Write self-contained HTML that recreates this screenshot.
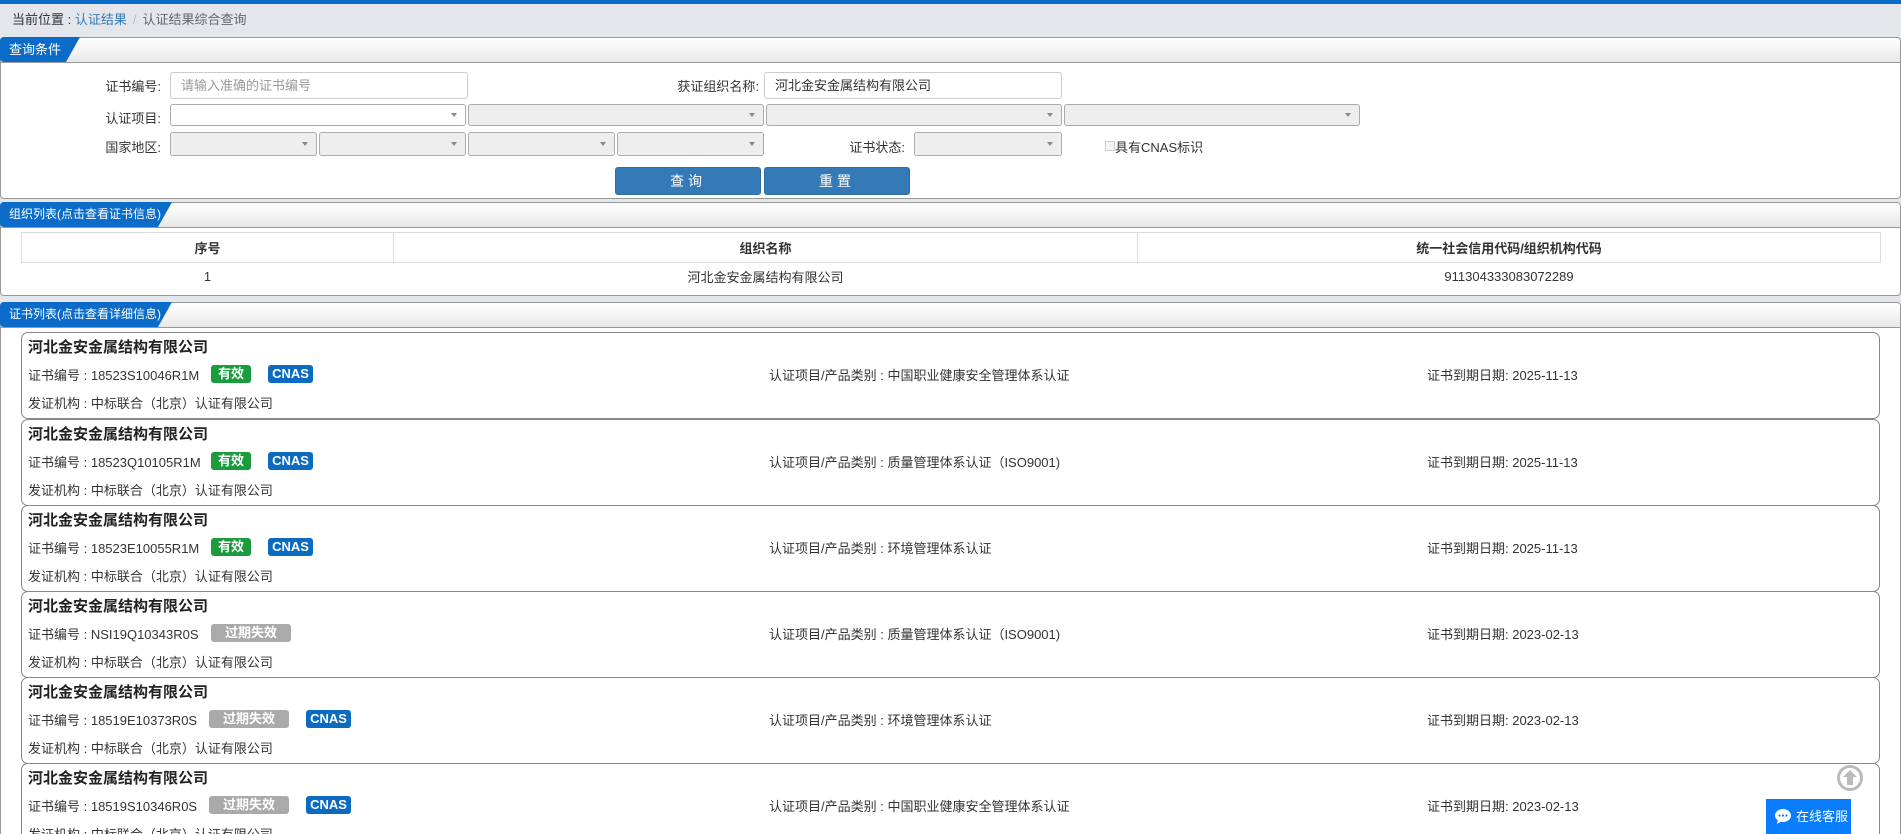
<!DOCTYPE html>
<html><head><meta charset="utf-8">
<style>
*{box-sizing:border-box;margin:0;padding:0}
html{width:1901px;height:834px;overflow:hidden}
body{width:1901px;height:834px;overflow:hidden;background:#e3e7eb;font-family:"Liberation Sans","Noto Sans CJK SC",sans-serif;font-size:13px;color:#333;position:relative}
.a{position:absolute}
.topbar{left:0;top:0;width:1901px;height:4px;background:#0a6bc9}
.bc{left:12px;top:9px;font-size:13px;color:#333}
.bc .l{color:#337ab7}.bc .s{color:#bbb;margin:0 6px}.bc .g{color:#666}
.panel{left:0;width:1901px;background:#fff;border:1px solid #999;border-radius:4px}
.ph{position:absolute;left:0;top:0;right:0;height:25px;background:linear-gradient(#fff,#e8e8e8);border-bottom:1px solid #999;border-radius:4px 4px 0 0}
.tab{position:absolute;left:-1px;top:-1px;height:25px;background:#0a6bc9;color:#fff;font-size:13px;line-height:25px;padding-left:9px;white-space:nowrap;border-radius:4px 0 0 4px;clip-path:polygon(0 0,100% 0,calc(100% - 14px) 100%,0 100%)}
.tab.s{font-size:12px}
.lbl{font-size:13px;color:#333;text-align:right}
.inp{border:1px solid #ccc;border-radius:3px;background:#fff;font-size:13px;padding-left:10px;line-height:26px}
.sel{border:1px solid #aaa;border-radius:3px;background:#eee}
.sel.w{background:#fff}
.sel::after{content:"";position:absolute;right:8px;top:50%;margin-top:-2px;border:3.5px solid transparent;border-top:4px solid #888}
.btn{background:#337ab7;border:1px solid #2e6da4;border-radius:3px;color:#fff;text-align:center;line-height:26px;font-size:14px;letter-spacing:4px}
table{border-collapse:collapse}
.card{left:21px;width:1859px;height:87px;border:1px solid #888;border-radius:7px;background:#fff}
.card .t{position:absolute;left:6px;top:3px;font-size:15px;font-weight:bold;color:#222}
.card .r{position:absolute;top:32px;font-size:13px}
.card .f{position:absolute;left:6px;top:60px;font-size:13px}
.bd{position:absolute;top:32px;height:18px;border-radius:3px;color:#fff;font-weight:bold;font-size:13px;text-align:center;line-height:18px}
.ok{background:#1a9b3c;width:40px;left:189px}
.cn{background:#0a6bc0;width:45px}
.ex{background:#aaa;width:80px;left:189px}
</style></head><body>
<div class="a topbar"></div>
<div class="a bc">当前位置 : <span class="l">认证结果</span><span class="s">/</span><span class="g">认证结果综合查询</span></div>

<div class="a panel" style="top:37px;height:162px">
 <div class="ph"></div><div class="tab" style="width:80px">查询条件</div>
 <div class="a lbl" style="left:60px;top:38px;width:100px">证书编号:</div>
 <div class="a inp" style="left:169px;top:34px;width:298px;height:27px;color:#999">请输入准确的证书编号</div>
 <div class="a lbl" style="left:600px;top:38px;width:158px">获证组织名称:</div>
 <div class="a inp" style="left:763px;top:34px;width:298px;height:27px">河北金安金属结构有限公司</div>
 <div class="a lbl" style="left:60px;top:70px;width:100px">认证项目:</div>
 <div class="a sel w" style="left:169px;top:66px;width:296px;height:22px"></div>
 <div class="a sel" style="left:467px;top:66px;width:296px;height:22px"></div>
 <div class="a sel" style="left:765px;top:66px;width:296px;height:22px"></div>
 <div class="a sel" style="left:1063px;top:66px;width:296px;height:22px"></div>
 <div class="a lbl" style="left:60px;top:99px;width:100px">国家地区:</div>
 <div class="a sel" style="left:169px;top:94px;width:147px;height:24px"></div>
 <div class="a sel" style="left:318px;top:94px;width:147px;height:24px"></div>
 <div class="a sel" style="left:467px;top:94px;width:147px;height:24px"></div>
 <div class="a sel" style="left:616px;top:94px;width:147px;height:24px"></div>
 <div class="a lbl" style="left:800px;top:99px;width:104px">证书状态:</div>
 <div class="a sel" style="left:913px;top:94px;width:148px;height:24px"></div>
 <div class="a" style="left:1104px;top:103px;width:10px;height:10px;border:1px solid #ccc;background:#f5f5f5"></div>
 <div class="a" style="left:1114px;top:99px;font-size:13px">具有CNAS标识</div>
 <div class="a btn" style="left:614px;top:129px;width:146px;height:28px">查询</div>
 <div class="a btn" style="left:763px;top:129px;width:146px;height:28px">重置</div>
</div>

<div class="a panel" style="top:202px;height:94px">
 <div class="ph"></div><div class="tab s" style="width:172px">组织列表(点击查看证书信息)</div>
 <table class="a" style="left:20px;top:29px;width:1860px;font-size:13px">
  <tr style="height:30px;font-weight:bold"><td style="border:1px solid #ddd;width:372px;text-align:center">序号</td><td style="border:1px solid #ddd;width:744px;text-align:center">组织名称</td><td style="border:1px solid #ddd;text-align:center">统一社会信用代码/组织机构代码</td></tr>
  <tr style="height:27px"><td style="text-align:center">1</td><td style="text-align:center">河北金安金属结构有限公司</td><td style="text-align:center">911304333083072289</td></tr>
 </table>
</div>

<div class="a panel" style="top:302px;height:540px">
 <div class="ph"></div><div class="tab s" style="width:172px">证书列表(点击查看详细信息)</div>
</div>

<div class="a card" style="top:332px"><div class="t">河北金安金属结构有限公司</div><div class="r" style="left:6px">证书编号 : 18523S10046R1M</div><div class="bd ok">有效</div><div class="bd cn" style="left:246px">CNAS</div><div class="r" style="left:747px">认证项目/产品类别 : 中国职业健康安全管理体系认证</div><div class="r" style="left:1405px">证书到期日期: 2025-11-13</div><div class="f">发证机构 : 中标联合（北京）认证有限公司</div></div>
<div class="a card" style="top:419px"><div class="t">河北金安金属结构有限公司</div><div class="r" style="left:6px">证书编号 : 18523Q10105R1M</div><div class="bd ok">有效</div><div class="bd cn" style="left:246px">CNAS</div><div class="r" style="left:747px">认证项目/产品类别 : 质量管理体系认证（ISO9001)</div><div class="r" style="left:1405px">证书到期日期: 2025-11-13</div><div class="f">发证机构 : 中标联合（北京）认证有限公司</div></div>
<div class="a card" style="top:505px"><div class="t">河北金安金属结构有限公司</div><div class="r" style="left:6px">证书编号 : 18523E10055R1M</div><div class="bd ok">有效</div><div class="bd cn" style="left:246px">CNAS</div><div class="r" style="left:747px">认证项目/产品类别 : 环境管理体系认证</div><div class="r" style="left:1405px">证书到期日期: 2025-11-13</div><div class="f">发证机构 : 中标联合（北京）认证有限公司</div></div>
<div class="a card" style="top:591px"><div class="t">河北金安金属结构有限公司</div><div class="r" style="left:6px">证书编号 : NSI19Q10343R0S</div><div class="bd ex">过期失效</div><div class="r" style="left:747px">认证项目/产品类别 : 质量管理体系认证（ISO9001)</div><div class="r" style="left:1405px">证书到期日期: 2023-02-13</div><div class="f">发证机构 : 中标联合（北京）认证有限公司</div></div>
<div class="a card" style="top:677px"><div class="t">河北金安金属结构有限公司</div><div class="r" style="left:6px">证书编号 : 18519E10373R0S</div><div class="bd ex" style="left:187px">过期失效</div><div class="bd cn" style="left:284px">CNAS</div><div class="r" style="left:747px">认证项目/产品类别 : 环境管理体系认证</div><div class="r" style="left:1405px">证书到期日期: 2023-02-13</div><div class="f">发证机构 : 中标联合（北京）认证有限公司</div></div>
<div class="a card" style="top:763px"><div class="t">河北金安金属结构有限公司</div><div class="r" style="left:6px">证书编号 : 18519S10346R0S</div><div class="bd ex" style="left:187px">过期失效</div><div class="bd cn" style="left:284px">CNAS</div><div class="r" style="left:747px">认证项目/产品类别 : 中国职业健康安全管理体系认证</div><div class="r" style="left:1405px">证书到期日期: 2023-02-13</div><div class="f">发证机构 : 中标联合（北京）认证有限公司</div></div>

<svg class="a" style="left:1836px;top:764px" width="28" height="28" viewBox="0 0 28 28"><circle cx="14" cy="14" r="11.5" fill="none" stroke="#bbb" stroke-width="3"/><path d="M14 6 L21 13 H17 V21 H11 V13 H7 Z" fill="#bbb"/></svg>
<div class="a" style="left:1766px;top:799px;width:85px;height:35px;background:#0a7cff;color:#fff;font-size:13px;line-height:35px;padding-left:30px;white-space:nowrap;overflow:hidden">在线客服
 <svg style="position:absolute;left:8px;top:9px" width="18" height="17" viewBox="0 0 18 17"><path d="M9 1C4.6 1 1 3.9 1 7.5c0 2 1.1 3.7 2.8 4.9L3 16l4-2.2c.6.1 1.3.2 2 .2 4.4 0 8-2.9 8-6.5S13.4 1 9 1z" fill="#fff"/><circle cx="5.5" cy="7.5" r="1.1" fill="#0a7cff"/><circle cx="9" cy="7.5" r="1.1" fill="#0a7cff"/><circle cx="12.5" cy="7.5" r="1.1" fill="#0a7cff"/></svg>
</div>
</body></html>
